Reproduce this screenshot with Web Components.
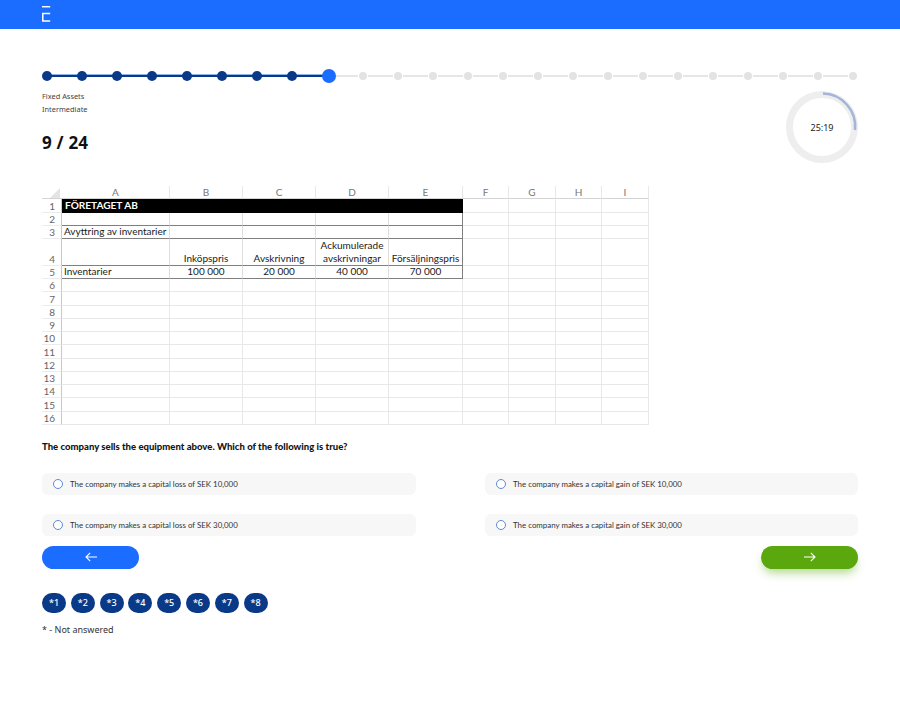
<!DOCTYPE html>
<html lang="en">
<head>
<meta charset="utf-8">
<title>Quiz</title>
<style>
  html, body { margin: 0; background: #fff; }
  body { font-family: "Lato", "Noto Sans", sans-serif; color: #111; }
  .page { display: flex; flex-direction: column; padding: 0 42px; }
  .meta { display: flex; justify-content: space-between; align-items: flex-start; height: 103px; }
  .options { display: grid; grid-template-columns: 374px 373px; justify-content: space-between; row-gap: 19px; margin-top: 20px; }
  .nav { display: flex; justify-content: space-between; margin-top: 10px; }
  .pills { display: flex; gap: 4.8px; margin-top: 24px; }
</style>
</head>
<body>
<app-header></app-header>
<div class="page">
  <step-progress total="24" current="9"></step-progress>
  <div class="meta">
    <quiz-info topic="Fixed Assets" level="Intermediate" count="9 / 24"></quiz-info>
    <quiz-timer time="25:19"></quiz-timer>
  </div>
  <sheet-table></sheet-table>
  <quiz-question>The company sells the equipment above. Which of the following is true?</quiz-question>
  <div class="options">
    <quiz-option>The company makes a capital loss of SEK 10,000</quiz-option>
    <quiz-option>The company makes a capital gain of SEK 10,000</quiz-option>
    <quiz-option>The company makes a capital loss of SEK 30,000</quiz-option>
    <quiz-option>The company makes a capital gain of SEK 30,000</quiz-option>
  </div>
  <div class="nav">
    <nav-button dir="back"></nav-button>
    <nav-button dir="next"></nav-button>
  </div>
  <div class="pills">
    <question-pill>*1</question-pill>
    <question-pill>*2</question-pill>
    <question-pill>*3</question-pill>
    <question-pill>*4</question-pill>
    <question-pill>*5</question-pill>
    <question-pill>*6</question-pill>
    <question-pill>*7</question-pill>
    <question-pill>*8</question-pill>
  </div>
  <quiz-note>* - Not answered</quiz-note>
</div>

<script>
class AppHeader extends HTMLElement {
  constructor() {
    super();
    this.attachShadow({ mode: 'open' });
    this.shadowRoot.innerHTML = `
      <style>
      :host { display: flex; align-items: flex-start; height: 29px; padding: 6px 0 0 42px; box-sizing: border-box; background: #1a6dff; }
      svg { display: block; }
      </style>
      <svg width="9" height="16" viewBox="0 0 9 16" fill="none" stroke="#fff" stroke-width="1.5">
        <path d="M0 .7H8.2"/>
        <path d="M8.2 7.4H.8V15H8.2"/>
      </svg>
    `;
  }
}
customElements.define('app-header', AppHeader);

class StepProgress extends HTMLElement {
  constructor() {
    super();
    this.attachShadow({ mode: 'open' });
    const total = +this.getAttribute('total');
    const current = +this.getAttribute('current');
    let html = '';
    for (let i = 1; i <= total; i++) {
      const state = i < current ? 'done' : i === current ? 'now' : 'todo';
      html += `<span class="stop"><i class="${state}"></i></span>`;
      if (i < total) html += `<span class="line ${i < current ? 'done' : 'todo'}"></span>`;
    }
    this.shadowRoot.innerHTML = `
      <style>
      :host { display: flex; align-items: center; height: 14px; margin-top: 40px; padding: 0 4.5px 0 5px; }
      .stop { flex: none; width: 0; display: flex; justify-content: center; position: relative; z-index: 1; }
      .stop i { flex: none; display: block; border-radius: 50%; }
      .stop .done { width: 10px; height: 10px; background: #0a3a87; }
      .stop .now { width: 14px; height: 14px; background: #1a6dff; margin-left: 2.5px; }
      .stop .todo { width: 8px; height: 8px; background: #e3e3e3; }
      .line { flex: 1 1 0; display: flex; }
      .line::before { content: ""; flex: 1; height: 2px; }
      .line.done::before { background: #0a3a87; box-shadow: 0 -1px 0 #8fb2e8; }
      .line.todo::before { background: #e6e6e6; margin: 0 5px; }
      </style>
      ${html}
    `;
  }
}
customElements.define('step-progress', StepProgress);

class QuizInfo extends HTMLElement {
  constructor() {
    super();
    this.attachShadow({ mode: 'open' });
    this.shadowRoot.innerHTML = `
      <style>
      :host { display: flex; flex-direction: column; padding-top: 7px; font-family: "Noto Sans", sans-serif; }
      .sub { font-size: 7.4px; line-height: 12.7px; color: #444; }
      .count { margin-top: 16px; font-size: 17px; line-height: 24px; font-weight: 700; letter-spacing: .2px; color: #111; }
      </style>
      <span class="sub">${this.getAttribute('topic')}</span>
      <span class="sub">${this.getAttribute('level')}</span>
      <span class="count">${this.getAttribute('count')}</span>
    `;
  }
}
customElements.define('quiz-info', QuizInfo);

class QuizTimer extends HTMLElement {
  constructor() {
    super();
    this.attachShadow({ mode: 'open' });
    this.shadowRoot.innerHTML = `
      <style>
      :host { display: grid; width: 72px; height: 72px; margin: 8px 0 0 0; }
      :host > * { grid-area: 1 / 1; }
      svg { display: block; }
      span { place-self: center; font-family: "Noto Sans", sans-serif; font-size: 9px; color: #222; }
      </style>
      <svg width="72" height="72" viewBox="0 0 72 72" fill="none">
        <circle cx="36" cy="36" r="32.5" stroke="#eeeeee" stroke-width="7"/>
        <path d="M37 2.5A33 33 0 0 1 69 39" stroke="#a3b5d8" stroke-width="2.6"/>
      </svg>
      <span>${this.getAttribute('time')}</span>
    `;
  }
}
customElements.define('quiz-timer', QuizTimer);

class SheetTable extends HTMLElement {
  constructor() {
    super();
    this.attachShadow({ mode: 'open' });
    const cols = ['A', 'B', 'C', 'D', 'E', 'F', 'G', 'H', 'I'];
    const rows = {
      3: { A: 'Avyttring av inventarier' },
      4: { B: 'Inköpspris', C: 'Avskrivning', D: 'Ackumulerade<br>avskrivningar', E: 'Försäljningspris' },
      5: { A: 'Inventarier', B: '100 000', C: '20 000', D: '40 000', E: '70 000' }
    };
    let html = '<div class="corner"><b></b></div>';
    cols.forEach(c => { html += `<div class="head">${c}</div>`; });
    for (let r = 1; r <= 16; r++) {
      html += `<div class="num">${r}</div>`;
      if (r === 1) {
        html += '<div class="banner">FÖRETAGET AB</div>';
        cols.slice(5).forEach(() => { html += '<div class="cell"></div>'; });
        continue;
      }
      cols.forEach((c, i) => {
        const cls = ['cell'];
        if (r <= 5 && i < 5) cls.push('box', 'rule');
        if (r <= 5 && i === 4) cls.push('edge');
        if (c === 'A') cls.push('left');
        const text = rows[r] && rows[r][c] ? rows[r][c] : '';
        html += `<div class="${cls.join(' ')}">${text}</div>`;
      });
    }
    this.shadowRoot.innerHTML = `
      <style>
      :host { display: grid; width: 607px;
        grid-template-columns: 20px 108px 73px 73px 73px 74px 46px 47px 46px 47px;
        grid-template-rows: 13px 14px 13px 13px 27px 13px repeat(11, 13.27px);
        font-family: "Lato", sans-serif; font-size: 10px; line-height: 13px; color: #1a1a1a; }
      div { box-sizing: border-box; min-width: 0; white-space: nowrap; }
      .corner { border-bottom: 1px solid #d4d4d4; padding: 2px 0 0 8px; }
      .corner b { display: block; width: 10px; height: 10px; background: #e4e4e4; clip-path: polygon(100% 0, 100% 100%, 0 100%); }
      .head { text-align: center; color: #777; border-bottom: 1px solid #d4d4d4; border-right: 1px solid #e8e8e8; line-height: 12px; }
      .num { display: flex; align-items: flex-end; justify-content: flex-end; padding-right: 6px; color: #666; border-right: 1px solid #c8c8c8; border-bottom: 1px solid #ececec; line-height: 12px; }
      .banner { grid-column: span 5; background: #000; color: #fff; font-weight: 700; font-size: 10.1px; padding-left: 3px; line-height: 13px; }
      .cell { display: flex; flex-direction: column; justify-content: flex-end; align-items: center; text-align: center;
        border-right: 1px solid #e8e8e8; border-bottom: 1px solid #e8e8e8; }
      .box { border-right-color: #dedede; }
      .left { align-items: flex-start; text-align: left; padding-left: 2px; }
      .rule { border-bottom-color: #7f7f7f; }
      .edge { border-right-color: #7f7f7f; }
      </style>
      ${html}
    `;
  }
}
customElements.define('sheet-table', SheetTable);

class QuizQuestion extends HTMLElement {
  constructor() {
    super();
    this.attachShadow({ mode: 'open' });
    this.shadowRoot.innerHTML = `
      <style>
      :host { display: block; margin-top: 16px; font-family: "Lato", sans-serif; font-size: 9.55px; line-height: 12px; font-weight: 900; color: #151515; }
      </style>
      <slot></slot>
    `;
  }
}
customElements.define('quiz-question', QuizQuestion);

class QuizOption extends HTMLElement {
  constructor() {
    super();
    this.attachShadow({ mode: 'open' });
    this.shadowRoot.innerHTML = `
      <style>
      :host { display: flex; align-items: center; gap: 7px; height: 22px; padding-left: 11px; background: #f7f7f7; border-radius: 6px;
        font-family: "Lato", sans-serif; font-size: 7.9px; color: #333; }
      i { flex: none; width: 10px; height: 10px; box-sizing: border-box; border: 1px solid #5f8ad6; border-radius: 50%; background: #fff; }
      </style>
      <i></i><slot></slot>
    `;
  }
}
customElements.define('quiz-option', QuizOption);

class NavButton extends HTMLElement {
  constructor() {
    super();
    this.attachShadow({ mode: 'open' });
    const next = this.getAttribute('dir') === 'next';
    this.shadowRoot.innerHTML = `
      <style>
      :host { display: flex; align-items: center; justify-content: center; width: 97px; height: 23px; border-radius: 12px;
        background: ${next ? '#5aa80e' : '#1a6dff'}; ${next ? 'box-shadow: 0 6px 10px -2px rgba(90,168,14,.45);' : ''} }
      svg { display: block; }
      </style>
      <svg width="12" height="10" viewBox="0 0 12 10" fill="none" stroke="#fff" stroke-width="1.1">
        <path d="${next ? 'M0 5H11M6.8 .8 11 5 6.8 9.2' : 'M12 5H1M5.2 .8 1 5 5.2 9.2'}"/>
      </svg>
    `;
  }
}
customElements.define('nav-button', NavButton);

class QuestionPill extends HTMLElement {
  constructor() {
    super();
    this.attachShadow({ mode: 'open' });
    this.shadowRoot.innerHTML = `
      <style>
      :host { display: flex; align-items: center; justify-content: center; width: 24px; height: 20px; border-radius: 10px;
        background: #0a3a87; color: #fff; font-family: "Noto Sans", sans-serif; font-size: 9px; font-weight: 500; }
      </style>
      <slot></slot>
    `;
  }
}
customElements.define('question-pill', QuestionPill);

class QuizNote extends HTMLElement {
  constructor() {
    super();
    this.attachShadow({ mode: 'open' });
    this.shadowRoot.innerHTML = `
      <style>
      :host { display: block; margin-top: 11px; font-family: "Noto Sans", sans-serif; font-size: 9px; line-height: 12px; color: #333; }
      </style>
      <slot></slot>
    `;
  }
}
customElements.define('quiz-note', QuizNote);
</script>
</body>
</html>
